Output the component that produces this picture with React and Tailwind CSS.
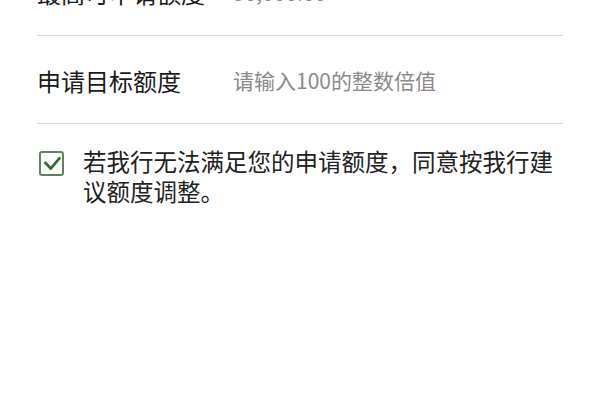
import React, { useState } from 'react';

const font = { fontFamily: '"Noto Sans CJK SC", "Noto Sans", sans-serif' };

const Row = ({ label, value }) => (
  <div className="flex items-center h-[88px] border-b border-[#dcdcdc]">
    <div className="w-[196px] shrink-0 text-[24px] text-[#1a1a1a] pt-[2px]">{label}</div>
    <div className="text-[21px] text-[#8a8a8a] pt-[2px]">{value}</div>
  </div>
);

const App = () => {
  const [agree, setAgree] = useState(true);

  return (
    <div className="w-[600px] h-[400px] bg-white overflow-hidden" style={font}>
      <div className="mx-[37px] mt-[-52px]">
        <Row label="最高可申请额度" value="50,000.00" />
        <Row label="申请目标额度" value="请输入100的整数倍值" />

        <div className="flex items-start pt-[22px]">
          <button
            type="button"
            onClick={() => setAgree(!agree)}
            className="mt-[5px] ml-[2px] w-[25px] h-[25px] shrink-0 border-2 border-[#5f8463] rounded-[3px] flex items-center justify-center"
          >
            {agree && (
              <svg width="20" height="20" viewBox="0 0 24 24" fill="none" stroke="#2d6a34" strokeWidth="3.2" strokeLinecap="round" strokeLinejoin="round">
                <path d="M4 10.5 10.5 17.5 21 5" />
              </svg>
            )}
          </button>
          <p className="ml-[19px] text-[23.5px] leading-[30px] text-[#222]">
            若我行无法满足您的申请额度，同意按我行建议额度调整。
          </p>
        </div>
      </div>
    </div>
  );
};

export default App;
